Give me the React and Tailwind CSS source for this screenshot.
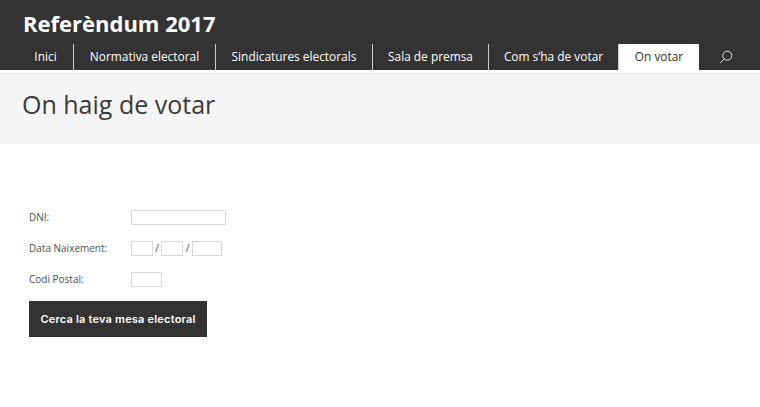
const navItems = [
  { label: "Inici", width: "w-[56px]" },
  { label: "Normativa electoral", width: "w-[142px]" },
  { label: "Sindicatures electorals", width: "w-[157px]" },
  { label: "Sala de premsa", width: "w-[116px]" },
  { label: "Com s’ha de votar", width: "w-[130px]" },
];

function Field({ className = "" }) {
  return <input type="text" className={`h-[15px] border border-[#d8d8d8] bg-white ${className}`} />;
}

function Row({ label, children }) {
  return (
    <div className="flex items-center h-[16px]">
      <span className="w-[102px] pt-[1px] text-[10px] text-[#4d4d4d]">{label}</span>
      <div className="flex items-center">{children}</div>
    </div>
  );
}

export default function App() {
  return (
    <div className="w-[760px] h-[407px] overflow-hidden bg-white font-['Open_Sans',sans-serif]">
      <header className="h-[70px] bg-[#333333] pl-[18px] flex flex-col">
        <div className="h-[44px] pl-[5px] pt-[6px] text-[22px] leading-[34px] font-bold text-white">Referèndum 2017</div>
        <nav className="flex h-[26px] items-stretch">
          {navItems.map((n) => (
            <a key={n.label} className={`${n.width} flex items-center justify-center text-[11.9px] text-white border-r border-[#cccccc] last:border-r-0 whitespace-nowrap`}>
              {n.label}
            </a>
          ))}
          <a className="w-[80px] flex items-center justify-center bg-white text-[11.9px] font-medium text-[#333]">On votar</a>
          <div className="w-[53px] flex items-center justify-center">
            <svg width="14" height="14" viewBox="0 0 14 14" fill="none" stroke="#dddddd" strokeWidth="1">
              <circle cx="8.3" cy="5.7" r="4.5" />
              <path d="M5 9 L1.2 13" />
            </svg>
          </div>
        </nav>
      </header>
      <div className="h-[71px] mt-[3px] bg-[#f5f5f5] border-t border-[#e8e8e8] pl-[22px] pt-[13px]">
        <h1 className="text-[25px] leading-[34px] text-[#3a3a3a]">On haig de votar</h1>
      </div>
      <main className="pl-[29px] pt-[65px] flex flex-col">
        <div className="flex flex-col gap-[15px]">
          <Row label="DNI:"><Field className="w-[95px]" /></Row>
          <Row label="Data Naixement:">
            <Field className="w-[22px]" />
            <span className="w-[8px] text-center text-[10px] text-[#444]">/</span>
            <Field className="w-[22px]" />
            <span className="w-[9px] text-center text-[10px] text-[#444]">/</span>
            <Field className="w-[30px]" />
          </Row>
          <Row label="Codi Postal:"><Field className="w-[31px]" /></Row>
        </div>
        <button className="mt-[14px] w-[178px] h-[36px] bg-[#333333] text-white text-[11px] font-semibold tracking-[0.2px] font-['Inter',sans-serif]">
          Cerca la teva mesa electoral
        </button>
      </main>
    </div>
  );
}
